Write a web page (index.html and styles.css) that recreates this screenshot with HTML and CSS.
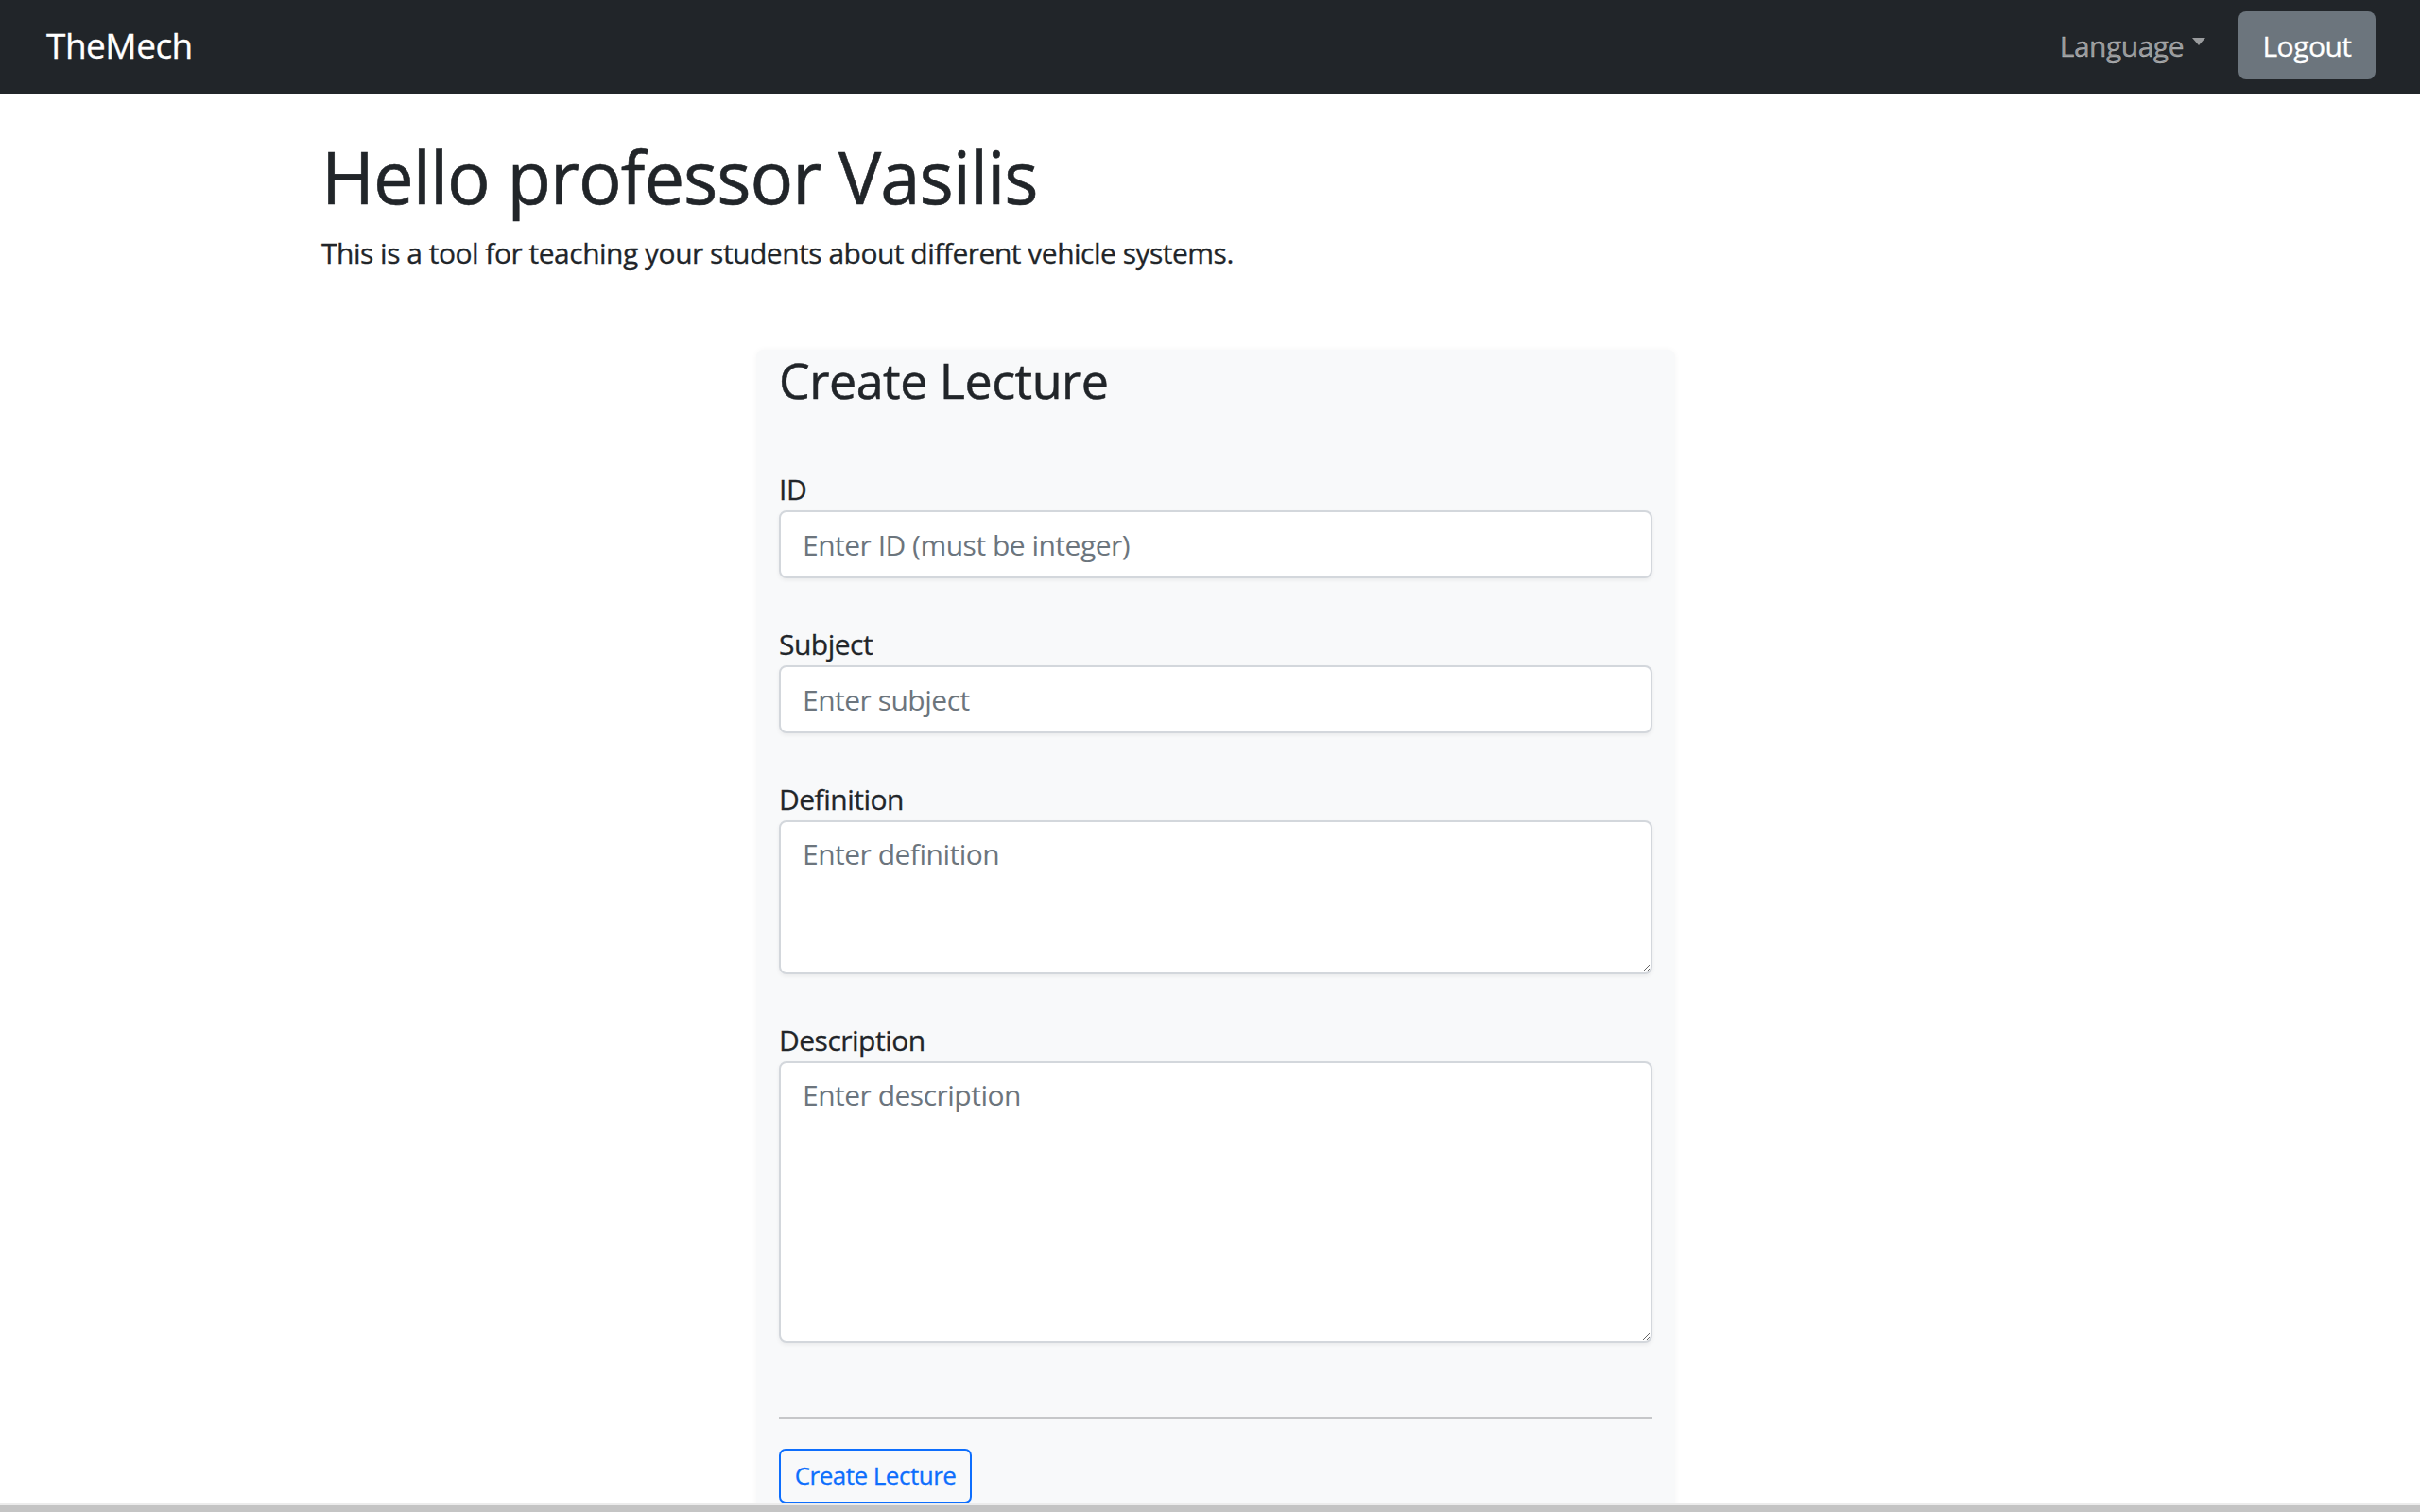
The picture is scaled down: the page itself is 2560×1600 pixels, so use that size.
FILE: index.html
```html
<!DOCTYPE html>
<html lang="en">
<head>
<meta charset="utf-8">
<title>TheMech</title>
<link rel="stylesheet" href="styles.css">
</head>
<body>
<nav class="navbar">
  <a class="brand" href="#">TheMech</a>
  <div class="nav-right">
    <a class="nav-link" href="#">Language<span class="caret"></span></a>
    <button class="btn-logout" type="button">Logout</button>
  </div>
</nav>
<main class="container">
  <h1 class="title">Hello professor Vasilis</h1>
  <p class="intro">This is a tool for teaching your students about different vehicle systems.</p>
  <form class="card">
    <h3 class="card-title">Create Lecture</h3>
    <div class="group">
      <label class="label" for="id">ID</label>
      <input class="control" id="id" type="text" placeholder="Enter ID (must be integer)">
    </div>
    <div class="group">
      <label class="label" for="subject">Subject</label>
      <input class="control" id="subject" type="text" placeholder="Enter subject">
    </div>
    <div class="group">
      <label class="label" for="definition">Definition</label>
      <textarea class="control area-sm" id="definition" placeholder="Enter definition"></textarea>
    </div>
    <div class="group">
      <label class="label" for="description">Description</label>
      <textarea class="control area-lg" id="description" placeholder="Enter description"></textarea>
    </div>
    <hr class="divider">
    <button class="btn-outline" type="button">Create Lecture</button>
  </form>
</main>
<div class="hscroll"></div>
</body>
</html>
```
FILE: styles.css
```css
* { box-sizing: border-box; }
html, body { margin: 0; padding: 0; }
body {
  font-family: "Open Sans", "Noto Sans", sans-serif;
  font-size: 30px;
  line-height: 45px;
  letter-spacing: -0.5px;
  color: #212529;
  background: #fff;
  -webkit-text-stroke: 0.3px currentColor;
}
.navbar {
  height: 100px;
  background: #212529;
  display: flex;
  align-items: center;
  justify-content: space-between;
  padding: 0 47px 4px 49px;
}
.brand {
  color: #fff;
  font-size: 37px;
  line-height: 56px;
  text-decoration: none;
}
.nav-right { display: flex; align-items: center; gap: 35px; }
.nav-link {
  color: rgba(255,255,255,.55);
  text-decoration: none;
  display: flex;
  align-items: center;
}
.caret {
  display: inline-block;
  margin-left: 9px;
  margin-top: -8px;
  border-left: 7.5px solid transparent;
  border-right: 7.5px solid transparent;
  border-top: 8px solid currentColor;
}
.btn-logout {
  width: 145px;
  height: 72px;
  background: #6c757d;
  color: #fff;
  border: 0;
  border-radius: 8px;
  font: inherit;
  letter-spacing: inherit;
  padding: 0;
}
.container { width: 1880px; margin: 0 auto; }
.title {
  margin: 41px 0 0;
  font-size: 76px;
  line-height: 91px;
  font-weight: 500;
  letter-spacing: -1px;
  -webkit-text-stroke: 0.6px currentColor;
}
.intro { margin: 13px 0 0; }
.card {
  margin: 80px 0 0 460px;
  width: 972px;
  background: #f8f9fa;
  border-radius: 8px;
  box-shadow: 0 0 6px rgba(0,0,0,.04);
  padding: 1px 24px 40px;
}
.card-title {
  margin: 0;
  font-size: 52px;
  line-height: 62px;
  font-weight: 500;
  letter-spacing: -0.5px;
  -webkit-text-stroke: 0.5px currentColor;
}
.group { display: flex; flex-direction: column; }
.group:first-of-type { margin-top: 62px; }
.group + .group { margin-top: 47px; }
.label { display: block; }
.control {
  width: 924px;
  height: 72px;
  border: 2px solid #d3d7dc;
  border-radius: 8px;
  background: #fff;
  box-shadow: 0 2px 4px rgba(0,0,0,.06);
  font: inherit;
  letter-spacing: inherit;
  color: #212529;
  padding: 11px 23px;
  -webkit-text-stroke: 0;
}
.control::placeholder { color: #6c757d; }
.area-sm { height: 163px; resize: vertical; }
.area-lg { height: 298px; resize: vertical; }
.divider {
  margin: 79px 0 0;
  border: 0;
  border-top: 2px solid #c6c7c9;
}
.btn-outline {
  margin-top: 31px;
  width: 204px;
  height: 58px;
  border: 2px solid #0d6efd;
  border-radius: 7px;
  background: transparent;
  color: #0d6efd;
  font: inherit;
  font-size: 26px;
  letter-spacing: inherit;
  padding: 0 0 2px;
}
.hscroll {
  position: fixed;
  left: 0; right: 0; bottom: 0;
  height: 9px;
  background: #c4c4c4;
  border-top: 2px solid #ececec;
}
```
